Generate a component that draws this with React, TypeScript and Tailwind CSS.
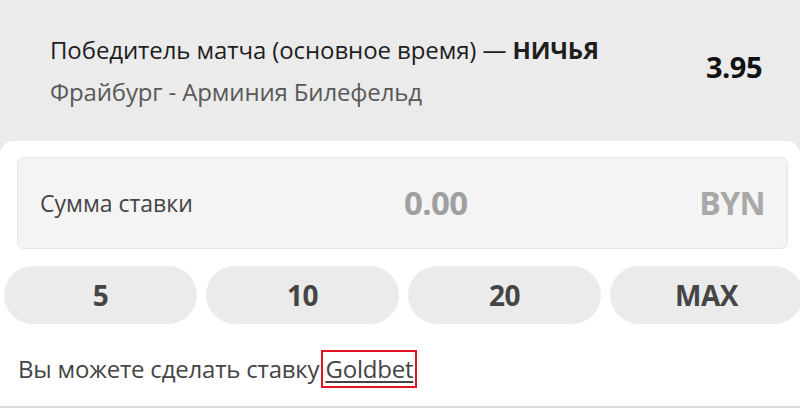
export default function App() {
  const amounts = ["5", "10", "20", "MAX"];

  return (
    <div className="h-[409px] w-[800px] overflow-hidden bg-[#ebebeb] font-['Open_Sans',sans-serif]">
      <div className="flex h-[141px] items-start justify-between pl-[50px] pr-[38px] pt-[34px]">
        <div>
          <div className="text-[24px] leading-[32px] tracking-[-0.1px] text-[#1e1e1e]">
            Победитель матча (основное время) — <span className="font-bold">НИЧЬЯ</span>
          </div>
          <div className="mt-[10px] text-[24px] leading-[32px] tracking-[-0.15px] text-[#595959]">
            Фрайбург - Арминия Билефельд
          </div>
        </div>
        <div className="mt-[15px] text-[29px] font-bold leading-[36px] tracking-[-0.5px] text-[#111]">3.95</div>
      </div>

      <div className="h-[268px] rounded-t-[14px] bg-white pt-[16px]">
        <div className="ml-[17px] mr-[12px] flex h-[92px] items-center rounded-[7px] border border-[#e6e6e6] bg-[#f4f4f4] pl-[22px] pr-[22px]">
          <span className="w-[230px] text-[23px] text-[#444]">Сумма ставки</span>
          <span className="ml-[134px] text-[33px] font-bold tracking-[-0.6px] text-[#a0a0a0]">0.00</span>
          <span className="ml-auto text-[32px] font-bold tracking-[-0.6px] text-[#a8a8a8]">BYN</span>
        </div>

        <div className="mt-[17px] flex w-[806px] gap-[9px] pl-[4px]">
          {amounts.map((a) => (
            <button
              key={a}
              className="flex h-[58px] w-[193px] shrink-0 items-center justify-center rounded-full bg-[#ebebeb] text-[28px] font-bold tracking-[-0.5px] text-[#454545]"
            >
              {a}
            </button>
          ))}
        </div>

        <div className="mt-[26px] flex items-center pl-[18px] text-[24px] tracking-[-0.2px] text-[#444]">
          <span>Вы можете сделать ставку</span>
          <span className="ml-[2px] border-2 border-[#e0141e] px-[2px] leading-[34px]">
            <a className="text-[#444] underline decoration-[1.5px] underline-offset-[3px]">Goldbet</a>
          </span>
        </div>

        <div className="mt-[18px] h-[2px] bg-[#dcdcdc]" />
      </div>
    </div>
  );
}
